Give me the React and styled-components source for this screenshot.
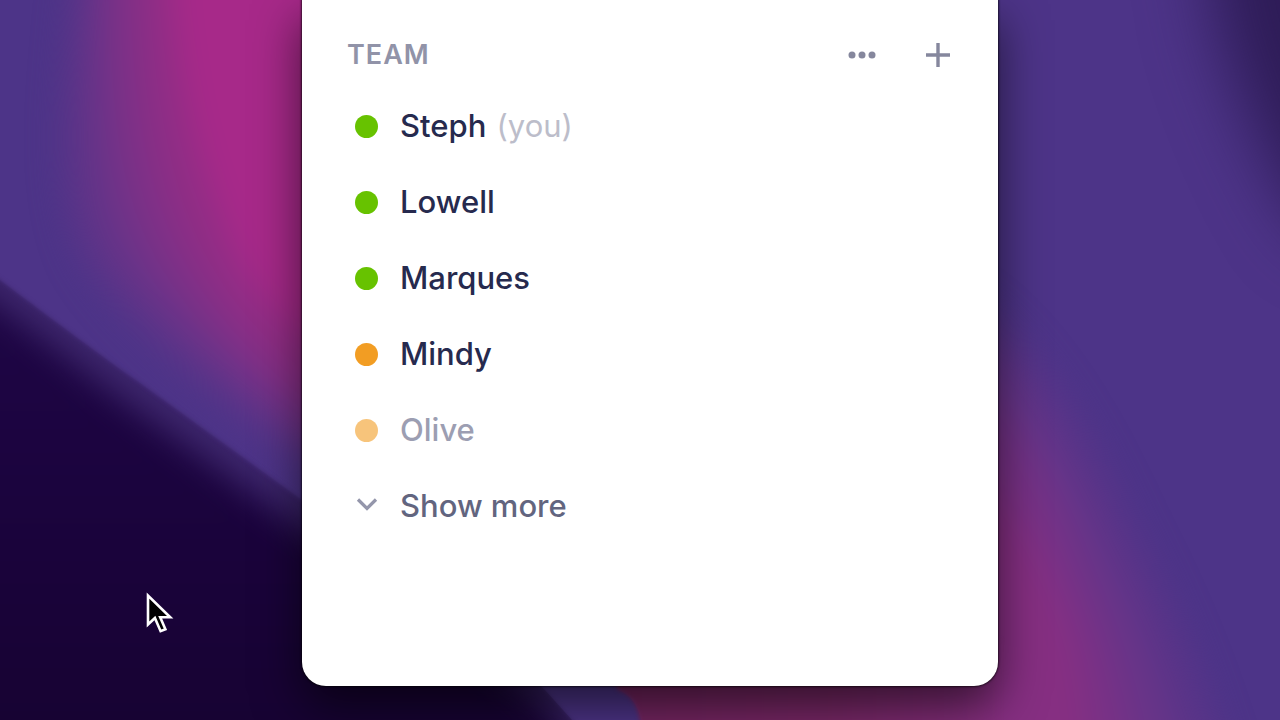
import React from 'react'

//Styles component
import styled, { createGlobalStyle } from 'styled-components'


const team = [
  { name: 'Steph', note: '(you)', status: 'active' },
  { name: 'Lowell', status: 'active' },
  { name: 'Marques', status: 'active' },
  { name: 'Mindy', status: 'idle' },
  { name: 'Olive', status: 'idle', muted: true },
]

const statusColors = {
  active: '#67c200',
  idle: '#f29d23',
}

const blurArea = {
  filterUnits: 'userSpaceOnUse',
  x: -200,
  y: -200,
  width: 1680,
  height: 1120,
  colorInterpolationFilters: 'sRGB',
}


// Desktop background
const Wallpaper = () => (
  <Backdrop viewBox="0 0 1280 720" preserveAspectRatio="xMidYMid slice" aria-hidden="true">
    <defs>
      <linearGradient id="night" x1="0" y1="0" x2="0" y2="1">
        <stop offset="0" stopColor="#220a4c" />
        <stop offset="0.4" stopColor="#1c0440" />
        <stop offset="1" stopColor="#14022a" />
      </linearGradient>
      <linearGradient id="ember" x1="0" y1="0" x2="1" y2="0">
        <stop offset="0" stopColor="#74245f" />
        <stop offset="0.6" stopColor="#7a2868" />
        <stop offset="1" stopColor="#862f80" />
      </linearGradient>
      <filter id="soft" {...blurArea}>
        <feGaussianBlur stdDeviation="16" />
      </filter>
      <filter id="wide" {...blurArea}>
        <feGaussianBlur stdDeviation="34" />
      </filter>
      <filter id="edge" {...blurArea}>
        <feGaussianBlur stdDeviation="2" />
      </filter>
      <clipPath id="nightClip">
        <path d="M-240 110 L0 280 C60 325 100 355 140 383 L302 500 L460 612 L545 690 L590 740 V920 H-240 Z" />
      </clipPath>
    </defs>
    <rect width="1280" height="720" fill="#4d3488" />

    <g filter="url(#soft)">
      <path d="M84 -160 C74 40 40 170 84 260 C130 335 230 410 330 480 L420 520 V-160 Z" fill="#5c3488" />
      <path d="M96 -160 C88 60 74 190 126 270 C170 335 260 410 330 462 L420 520 V-160 Z" fill="#6d3388" />
      <path d="M112 -160 C106 80 112 190 164 272 C205 335 270 395 330 440 L420 500 V-160 Z" fill="#7f3087" />
      <path d="M136 -160 C136 80 150 180 200 270 C230 325 280 370 330 410 L420 460 V-160 Z" fill="#902d85" />
      <path d="M166 -160 C166 40 190 140 222 220 C240 280 280 320 330 350 L420 380 V-160 Z" fill="#a72989" />
    </g>

    <path d="M1200 -160 L1212 0 C1230 80 1270 170 1310 230 L1480 300 V-160 Z" fill="#2e1c57" filter="url(#wide)" />

    <g filter="url(#soft)">
      <path d="M960 290 C1030 330 1090 430 1130 520 C1170 600 1210 680 1250 840 H620 V660 H960 Z" fill="#593488" />
      <path d="M960 315 C1020 370 1070 460 1104 540 C1140 620 1170 680 1200 840 H625 V660 H960 Z" fill="#683488" />
      <path d="M960 370 C1020 430 1055 500 1080 570 C1110 640 1130 700 1150 840 H640 V660 H960 Z" fill="#783186" />
      <path d="M960 450 C1020 510 1050 570 1070 630 C1086 680 1090 730 1096 840 H650 V660 H960 Z" fill="#862f82" />
    </g>
    <path d="M500 640 H600 L618 690 C634 696 640 708 646 740 H500 Z" fill="#4d3488" />
    <path d="M600 640 L618 690 C634 696 640 708 642 740 H1000 V640 Z" fill="url(#ember)" filter="url(#edge)" />

    <path d="M-240 110 L0 280 C60 325 100 355 140 383 L302 500 L460 612 L545 690 L590 740 V920 H-240 Z" fill="#3d266c" filter="url(#edge)" />
    <g clipPath="url(#nightClip)">
      <path d="M-240 130 L0 306 C60 350 100 384 140 412 L302 528 L460 636 L545 706 L590 760 V920 H-240 Z" fill="url(#night)" filter="url(#soft)" />
    </g>
  </Backdrop>
)


const App = () => {
  return (
    <Desktop>
      <GlobalStyle />
      <Wallpaper />

      <Panel>
        <Header>
          <h2>Team</h2>
          <Actions>
            <IconButton aria-label="Team options">
              <svg width="28" height="28" viewBox="0 0 28 28" fill="currentColor">
                <circle cx="4" cy="14" r="3.5" />
                <circle cx="14" cy="14" r="3.5" />
                <circle cx="24" cy="14" r="3.5" />
              </svg>
            </IconButton>
            <IconButton aria-label="Add a teammate">
              <svg width="28" height="28" viewBox="0 0 28 28" stroke="currentColor" strokeWidth="3.4">
                <path d="M14 2V26M2 14H26" />
              </svg>
            </IconButton>
          </Actions>
        </Header>

        <List>
          {team.map(person => (
            <li key={person.name}>
              <Row $muted={person.muted}>
                <Marker>
                  <Status $color={statusColors[person.status]} $muted={person.muted} />
                </Marker>
                <Label>{person.name} {person.note && <Note>{person.note}</Note>}</Label>
              </Row>
            </li>
          ))}
          <li>
            <Row $more>
              <Marker>
                <svg width="22" height="28" viewBox="0 0 22 28" fill="none" stroke="#9496ab" strokeWidth="3.2">
                  <path d="M2 7.5L11 16.5L20 7.5" />
                </svg>
              </Marker>
              <Label>Show more</Label>
            </Row>
          </li>
        </List>
      </Panel>

      <Pointer width="28" height="44" viewBox="0 0 28 44" aria-hidden="true">
        <path
          d="M2 4.5V33.4L8.9 27L14.6 40.2L19.4 38.3L14.2 26.2H24.2Z"
          fill="#000"
          stroke="#fff"
          strokeWidth="2.6"
        />
      </Pointer>
    </Desktop>
  )
}


// Style components

const GlobalStyle = createGlobalStyle`
  * {
    box-sizing: border-box;
  }

  body {
    margin: 0;
    font-family: Inter, "Liberation Sans", sans-serif;
  }
`;

const Desktop = styled.main`
  position: relative;
  display: flex;
  flex-direction: column;
  align-items: center;
  min-height: 100vh;
  padding: 0 0 34px 20px;
  overflow: hidden;
  background: #14022c;
`;

const Backdrop = styled.svg`
  position: absolute;
  inset: 0;
  width: 100%;
  height: 100%;
`;

const Panel = styled.section`
  position: relative;
  flex: 1;
  width: 100%;
  max-width: 696px;
  padding: 21px 46px 40px 45px;
  border-radius: 0 0 24px 24px;
  background: #fff;
  box-shadow: 0 0 2px 1px rgba(0, 0, 0, 0.6), 0 20px 48px rgba(0, 0, 0, 0.6);
`;

const Header = styled.header`
  display: flex;
  align-items: center;
  justify-content: space-between;
  height: 67px;

  h2 {
    margin: 0;
    color: #9193a8;
    font-size: 27px;
    font-weight: 600;
    letter-spacing: 1px;
    text-transform: uppercase;
  }
`;

const Actions = styled.div`
  display: flex;
  gap: 48px;
`;

const IconButton = styled.button`
  display: flex;
  padding: 0;
  border: 0;
  background: none;
  color: #85879d;
`;

const List = styled.ul`
  margin: 0;
  padding: 0;
  list-style: none;
`;

const Row = styled.button`
  display: flex;
  align-items: center;
  gap: 14px;
  width: 100%;
  height: 76px;
  padding: 0;
  border: 0;
  background: none;
  color: ${({ $muted, $more }) => ($muted ? '#9c9eb2' : $more ? '#62657f' : '#262a4e')};
  font-family: inherit;
  font-size: 31px;
  font-weight: 500;
  text-align: left;
`;

const Marker = styled.span`
  display: flex;
  justify-content: center;
  width: 39px;
`;

const Status = styled.span`
  width: 23px;
  height: 23px;
  border-radius: 50%;
  background: ${({ $color }) => $color};
  opacity: ${({ $muted }) => ($muted ? 0.6 : 1)};
`;

const Label = styled.span`
  padding-bottom: 2px;
`;

const Note = styled.span`
  margin-left: 2px;
  color: #bcbdca;
  font-weight: 400;
`;

const Pointer = styled.svg`
  position: absolute;
  top: 591px;
  left: 146px;
`;


export default App
